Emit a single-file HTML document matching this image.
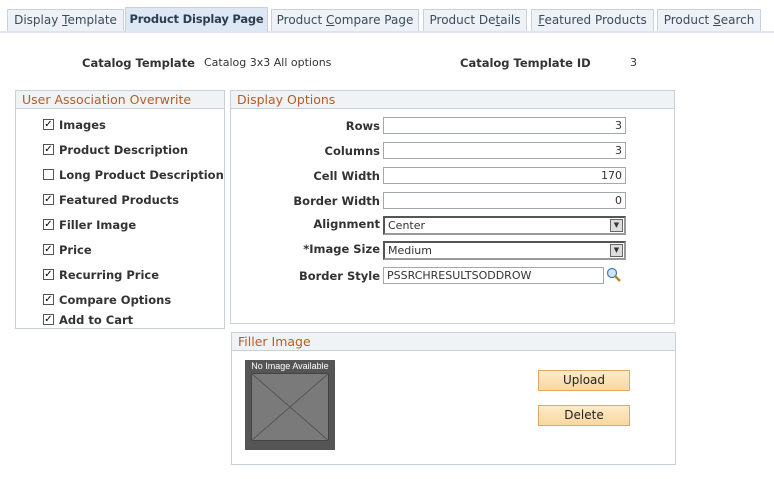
<!DOCTYPE html>
<html><head><style>
*{margin:0;padding:0;box-sizing:border-box}
body{width:774px;height:479px;background:#fff;font-family:"DejaVu Sans","Liberation Sans",sans-serif;font-size:11px;color:#333;position:relative;overflow:hidden}
.a{position:absolute;white-space:nowrap}
.tab{position:absolute;top:9px;height:22px;border:1px solid #c8d2dc;border-bottom:none;background:#eef2f6;color:#3a4b5c;font-size:12px;text-align:center;line-height:20px;white-space:nowrap;overflow:hidden}
.tab.on{top:7px;height:25px;background:#dde8f4;font-weight:bold;color:#2c3e50;line-height:22px;font-size:11.5px;letter-spacing:-0.2px}
.box{position:absolute;border:1px solid #c9d0d6}
.hd{height:18px;background:#f0f3f5;border-bottom:1px solid #c9d0d6;color:#b85c22;font-size:12.5px;padding-left:6px;line-height:18px}
.b{font-weight:bold;color:#333;font-size:11.5px}
.cb{position:absolute;width:11px;height:11px;border:1px solid #555;background:#fff;font-size:10px;line-height:9px;text-align:center;font-weight:bold;color:#000}
.lab{position:absolute;right:394px;font-weight:bold;text-align:right;font-size:11.5px;white-space:nowrap}
.in{position:absolute;left:383px;height:17px;border:1px solid #a0a8b0;background:#fff;padding:0 3px;line-height:15px}
.sel{position:absolute;left:383px;width:243px;height:19px;border:2px solid #555;border-right-color:#999;border-bottom-color:#999;background:#fff;padding-left:3px;line-height:15px}
.sel i{position:absolute;right:1px;top:1px;width:13px;height:13px;background:#ddd;border:1px solid #666;font-style:normal;font-size:7px;line-height:11px;text-align:center}
.btn{position:absolute;left:538px;width:92px;height:21px;border:1px solid #e0a860;background:linear-gradient(#fdebc8,#f8d8a0);text-align:center;line-height:19px;font-size:12px;color:#222}
</style></head><body>
<div class="a" style="left:0;top:31px;width:774px;height:2px;background:#dce6f0"></div>
<div class="tab" style="left:7px;width:117px">Display <u>T</u>emplate</div>
<div class="tab on" style="left:125px;width:143px">Product Display Page</div>
<div class="tab" style="left:271px;width:148px">Product <u>C</u>ompare Page</div>
<div class="tab" style="left:423px;width:104px">Product De<u>t</u>ails</div>
<div class="tab" style="left:531px;width:123px"><u>F</u>eatured Products</div>
<div class="tab" style="left:657px;width:104px">Product <u>S</u>earch</div>

<div class="a b" style="left:82px;top:56px">Catalog Template</div>
<div class="a" style="left:204px;top:56px">Catalog 3x3 All options</div>
<div class="a b" style="left:460px;top:56px">Catalog Template ID</div>
<div class="a" style="left:630px;top:56px">3</div>

<div class="box" style="left:15px;top:90px;width:210px;height:239px"><div class="hd">User Association Overwrite</div></div>
<div class="cb" style="left:43px;top:119px">✓</div><div class="a b" style="left:59px;top:118px">Images</div>
<div class="cb" style="left:43px;top:144px">✓</div><div class="a b" style="left:59px;top:143px">Product Description</div>
<div class="cb" style="left:43px;top:169px"></div><div class="a b" style="left:59px;top:168px">Long Product Description</div>
<div class="cb" style="left:43px;top:194px">✓</div><div class="a b" style="left:59px;top:193px">Featured Products</div>
<div class="cb" style="left:43px;top:219px">✓</div><div class="a b" style="left:59px;top:218px">Filler Image</div>
<div class="cb" style="left:43px;top:244px">✓</div><div class="a b" style="left:59px;top:243px">Price</div>
<div class="cb" style="left:43px;top:269px">✓</div><div class="a b" style="left:59px;top:268px">Recurring Price</div>
<div class="cb" style="left:43px;top:294px">✓</div><div class="a b" style="left:59px;top:293px">Compare Options</div>
<div class="cb" style="left:43px;top:314px">✓</div><div class="a b" style="left:59px;top:313px">Add to Cart</div>

<div class="box" style="left:230px;top:90px;width:445px;height:234px"><div class="hd">Display Options</div></div>
<div class="lab" style="top:119px">Rows</div><div class="in" style="top:117px;width:243px;text-align:right">3</div>
<div class="lab" style="top:144px">Columns</div><div class="in" style="top:142px;width:243px;text-align:right">3</div>
<div class="lab" style="top:169px">Cell Width</div><div class="in" style="top:167px;width:243px;text-align:right">170</div>
<div class="lab" style="top:194px">Border Width</div><div class="in" style="top:192px;width:243px;text-align:right">0</div>
<div class="lab" style="top:217px">Alignment</div><div class="sel" style="top:216px">Center<i>▼</i></div>
<div class="lab" style="top:242px">*Image Size</div><div class="sel" style="top:241px">Medium<i>▼</i></div>
<div class="lab" style="top:269px">Border Style</div><div class="in" style="top:267px;width:221px">PSSRCHRESULTSODDROW</div>
<svg class="a" style="left:606px;top:267px" width="16" height="16"><circle cx="6" cy="6" r="4.5" fill="#cfe6fa" stroke="#4a7fb0" stroke-width="1.3"/><line x1="9.5" y1="9.5" x2="14" y2="14" stroke="#b8862a" stroke-width="2.5"/></svg>

<div class="box" style="left:231px;top:332px;width:445px;height:133px"><div class="hd">Filler Image</div></div>
<div class="a" style="left:245px;top:360px;width:90px;height:90px;background:#555"></div>
<div class="a" style="left:245px;top:361px;width:90px;text-align:center;color:#fff;font-size:9px;font-family:'Liberation Sans',sans-serif">No Image Available</div>
<svg class="a" style="left:251px;top:373px" width="78" height="68"><rect x="0.5" y="0.5" width="77" height="67" fill="#7a7a7a" stroke="#444"/><line x1="0" y1="0" x2="78" y2="68" stroke="#555"/><line x1="78" y1="0" x2="0" y2="68" stroke="#555"/></svg>
<div class="btn" style="top:370px">Upload</div>
<div class="btn" style="top:405px">Delete</div>
</body></html>
